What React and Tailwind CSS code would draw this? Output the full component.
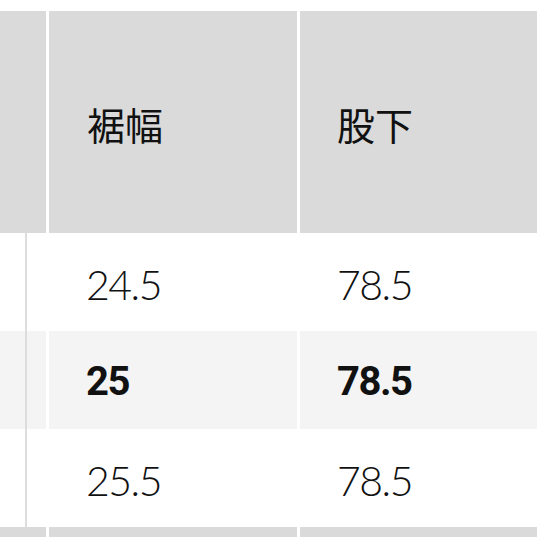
import React from 'react'

const rows = [
  { hem: '24.5', inseam: '78.5', active: false },
  { hem: '25', inseam: '78.5', active: true },
  { hem: '25.5', inseam: '78.5', active: false },
]

const cjk = { fontFamily: '"Noto Sans CJK JP", sans-serif' }

export default function App() {
  return (
    <div className="w-[537px] h-[537px] overflow-hidden bg-white flex flex-col" style={{ fontFamily: 'Roboto, "Noto Sans CJK JP", sans-serif' }}>
      {/* top gap */}
      <div className="h-[11px] shrink-0" />

      {/* Header */}
      <div className="flex gap-[3px] h-[222px] shrink-0">
        <div className="w-[46px] bg-[#dadada]" />
        <div className="w-[248px] bg-[#dadada] flex items-center pl-[38px] pt-[3px]">
          <span className="text-[38px] text-[#111] leading-none" style={cjk}>裾幅</span>
        </div>
        <div className="flex-1 bg-[#dadada] flex items-center pl-[37px] pt-[3px]">
          <span className="text-[38px] text-[#111] leading-none" style={cjk}>股下</span>
        </div>
      </div>

      {/* Body rows */}
      {rows.map((r, i) => (
        <div key={i} className="flex gap-[3px] h-[98px] shrink-0 bg-white">
          <div className={`w-[46px] ${r.active ? 'bg-[#f4f4f4]' : 'bg-white'}`}>
            <div className="w-[27px] h-full border-r-2 border-[#dddddd]" />
          </div>
          <div className={`w-[248px] flex items-center pl-[37px] pt-[4px] ${r.active ? 'bg-[#f4f4f4]' : 'bg-white'}`}>
            {r.active ? (
              <span className="text-[40px] leading-none text-[#111] font-bold tracking-[-1.5px]">{r.hem}</span>
            ) : (
              <span className="text-[41px] leading-none text-[#111] font-light tracking-[-1.5px]" style={{ fontFamily: 'Lato, sans-serif' }}>{r.hem}</span>
            )}
          </div>
          <div className={`flex-1 flex items-center pl-[37px] pt-[4px] ${r.active ? 'bg-[#f4f4f4]' : 'bg-white'}`}>
            {r.active ? (
              <span className="text-[40px] leading-none text-[#111] font-bold tracking-[-1.5px]">{r.inseam}</span>
            ) : (
              <span className="text-[41px] leading-none text-[#111] font-light tracking-[-1.5px]" style={{ fontFamily: 'Lato, sans-serif' }}>{r.inseam}</span>
            )}
          </div>
        </div>
      ))}

      {/* next section header peeking */}
      <div className="flex gap-[3px] h-[10px] shrink-0">
        <div className="w-[46px] bg-[#dadada]" />
        <div className="w-[248px] bg-[#dadada]" />
        <div className="flex-1 bg-[#dadada]" />
      </div>
    </div>
  )
}
